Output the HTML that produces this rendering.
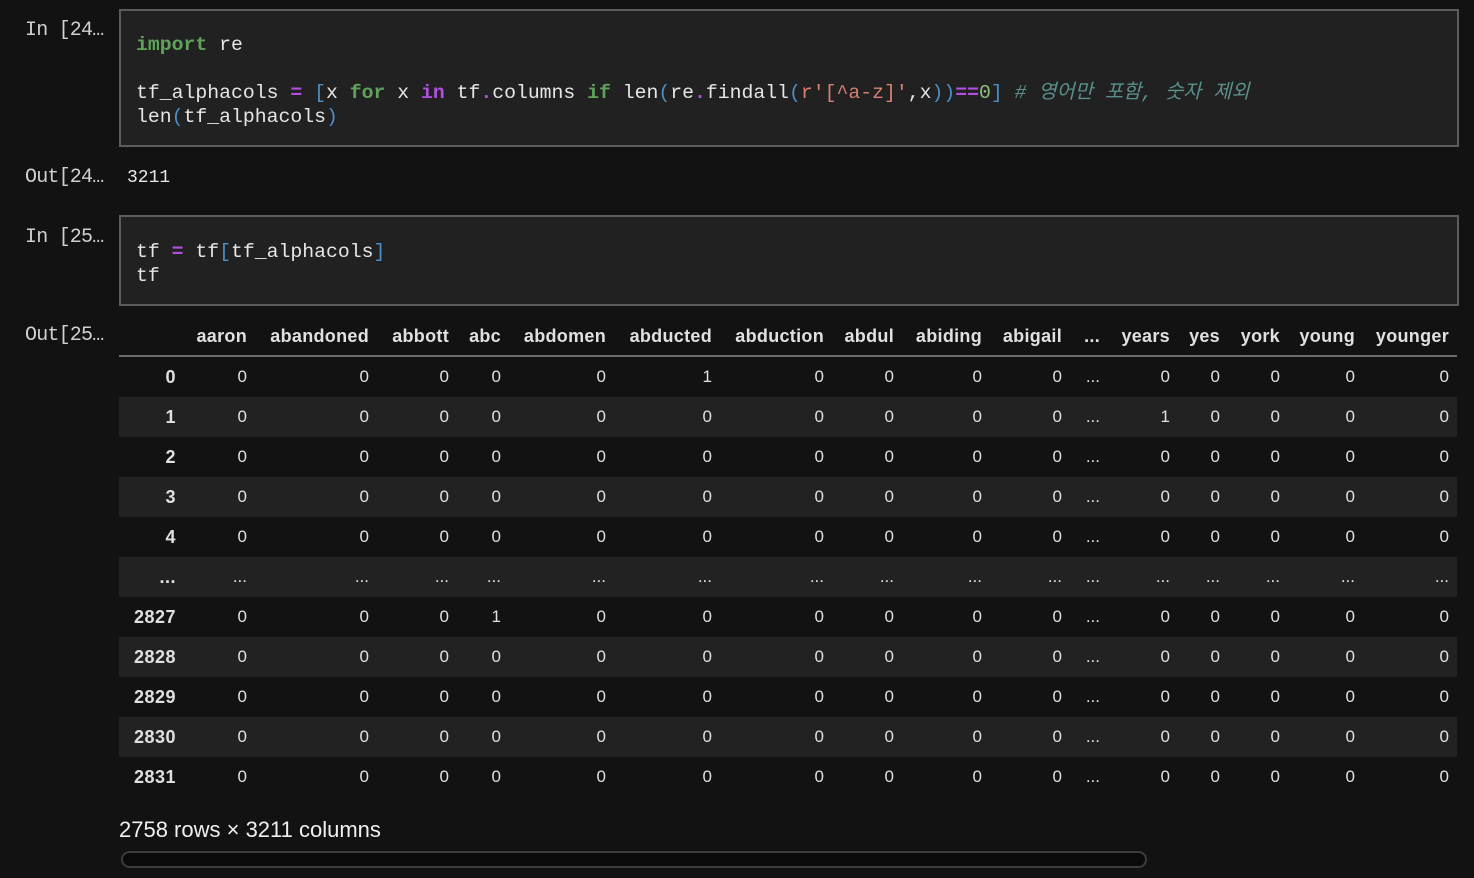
<!DOCTYPE html>
<html><head><meta charset="utf-8"><style>
body{margin:0;width:1474px;height:878px;background:#121212;overflow:hidden;position:relative;color:#e8e8e8}
.p{position:absolute;left:25px;font:20px "Liberation Mono","DejaVu Sans Mono",monospace;color:#d0d0d0;letter-spacing:-0.8px}
.box{position:absolute;left:119px;width:1336px;background:#212121;border:2px solid #5c5c5c}
.code{position:absolute;left:136px;font:19.8px/24px "Liberation Mono","Noto Sans CJK KR",monospace;color:#e6e6e6;white-space:pre;margin:0}
.k{color:#5fa35a;font-weight:bold}.o{color:#b04fe0;font-weight:bold}.b{color:#4b8fc8}.s{color:#d98170}.n{color:#8cc07e}.c{color:#5a8f8c;font-style:italic}
table{position:absolute;left:119px;top:318px;border-collapse:collapse;font:17px "Liberation Sans","Helvetica",sans-serif;table-layout:fixed}
td,th{text-align:right;padding:0 8px 0 0;height:40px;white-space:nowrap;overflow:visible}
thead th{font-size:18px;letter-spacing:0.3px}
th{font-weight:bold;color:#e0e0e0;height:37px;border-bottom:2px solid #6a6a6a}
tbody th{border:none;height:40px;font-size:18px;letter-spacing:0.5px}
tr.s td,tr.s th{background:#222}
td{color:#e0e0e0}
</style></head><body>
<div class="p" style="top:19px">In [24…</div>
<div class="box" style="top:9px;height:134px"></div>
<pre class="code" style="top:33px"><span class="k">import</span> re

tf_alphacols <span class="o">=</span> <span class="b">[</span>x <span class="k">for</span> x <span class="o">in</span> tf<span class="o">.</span>columns <span class="k">if</span> len<span class="b">(</span>re<span class="o">.</span>findall<span class="b">(</span><span class="s">r'[^a-z]'</span>,x<span class="b">))</span><span class="o">==</span><span class="n">0</span><span class="b">]</span> <span class="c"># 영어만 포함, 숫자 제외</span>
len<span class="b">(</span>tf_alphacols<span class="b">)</span></pre>
<div class="p" style="top:166px">Out[24…</div>
<div style="position:absolute;left:127px;top:168px;font:18px 'Liberation Mono',monospace">3211</div>
<div class="p" style="top:226px">In [25…</div>
<div class="box" style="top:215px;height:87px"></div>
<pre class="code" style="top:240px">tf <span class="o">=</span> tf<span class="b">[</span>tf_alphacols<span class="b">]</span>
tf</pre>
<div class="p" style="top:324px">Out[25…</div>
<table>
<colgroup><col style="width:65px"><col style="width:71px"><col style="width:122px"><col style="width:80px"><col style="width:52px"><col style="width:105px"><col style="width:106px"><col style="width:112px"><col style="width:70px"><col style="width:88px"><col style="width:80px"><col style="width:38px"><col style="width:70px"><col style="width:50px"><col style="width:60px"><col style="width:75px"><col style="width:94px"></colgroup>
<thead><tr><th></th><th>aaron</th><th>abandoned</th><th>abbott</th><th>abc</th><th>abdomen</th><th>abducted</th><th>abduction</th><th>abdul</th><th>abiding</th><th>abigail</th><th>...</th><th>years</th><th>yes</th><th>york</th><th>young</th><th>younger</th></tr></thead>
<tbody>
<tr><th>0</th><td>0</td><td>0</td><td>0</td><td>0</td><td>0</td><td>1</td><td>0</td><td>0</td><td>0</td><td>0</td><td>...</td><td>0</td><td>0</td><td>0</td><td>0</td><td>0</td></tr>
<tr class="s"><th>1</th><td>0</td><td>0</td><td>0</td><td>0</td><td>0</td><td>0</td><td>0</td><td>0</td><td>0</td><td>0</td><td>...</td><td>1</td><td>0</td><td>0</td><td>0</td><td>0</td></tr>
<tr><th>2</th><td>0</td><td>0</td><td>0</td><td>0</td><td>0</td><td>0</td><td>0</td><td>0</td><td>0</td><td>0</td><td>...</td><td>0</td><td>0</td><td>0</td><td>0</td><td>0</td></tr>
<tr class="s"><th>3</th><td>0</td><td>0</td><td>0</td><td>0</td><td>0</td><td>0</td><td>0</td><td>0</td><td>0</td><td>0</td><td>...</td><td>0</td><td>0</td><td>0</td><td>0</td><td>0</td></tr>
<tr><th>4</th><td>0</td><td>0</td><td>0</td><td>0</td><td>0</td><td>0</td><td>0</td><td>0</td><td>0</td><td>0</td><td>...</td><td>0</td><td>0</td><td>0</td><td>0</td><td>0</td></tr>
<tr class="s"><th>...</th><td>...</td><td>...</td><td>...</td><td>...</td><td>...</td><td>...</td><td>...</td><td>...</td><td>...</td><td>...</td><td>...</td><td>...</td><td>...</td><td>...</td><td>...</td><td>...</td></tr>
<tr><th>2827</th><td>0</td><td>0</td><td>0</td><td>1</td><td>0</td><td>0</td><td>0</td><td>0</td><td>0</td><td>0</td><td>...</td><td>0</td><td>0</td><td>0</td><td>0</td><td>0</td></tr>
<tr class="s"><th>2828</th><td>0</td><td>0</td><td>0</td><td>0</td><td>0</td><td>0</td><td>0</td><td>0</td><td>0</td><td>0</td><td>...</td><td>0</td><td>0</td><td>0</td><td>0</td><td>0</td></tr>
<tr><th>2829</th><td>0</td><td>0</td><td>0</td><td>0</td><td>0</td><td>0</td><td>0</td><td>0</td><td>0</td><td>0</td><td>...</td><td>0</td><td>0</td><td>0</td><td>0</td><td>0</td></tr>
<tr class="s"><th>2830</th><td>0</td><td>0</td><td>0</td><td>0</td><td>0</td><td>0</td><td>0</td><td>0</td><td>0</td><td>0</td><td>...</td><td>0</td><td>0</td><td>0</td><td>0</td><td>0</td></tr>
<tr><th>2831</th><td>0</td><td>0</td><td>0</td><td>0</td><td>0</td><td>0</td><td>0</td><td>0</td><td>0</td><td>0</td><td>...</td><td>0</td><td>0</td><td>0</td><td>0</td><td>0</td></tr>
</tbody></table>
<div style="position:absolute;left:119px;top:817px;font:22px 'Liberation Sans',sans-serif;color:#f0f0f0">2758 rows × 3211 columns</div>
<div style="position:absolute;left:121px;top:851px;width:1022px;height:13px;border:2px solid #3c3c3c;border-radius:9px;background:#0a0a0a"></div>
</body></html>
